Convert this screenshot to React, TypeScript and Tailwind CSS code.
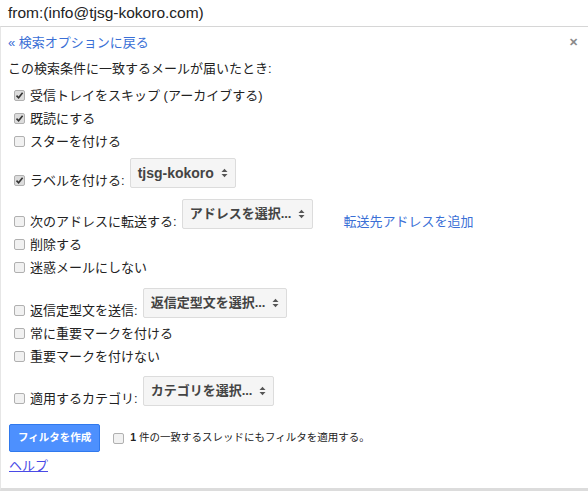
import React from "react";

const FONT = "font-['Liberation_Sans','Noto_Sans_CJK_JP',sans-serif]";

function Box({ checked = false }: { checked?: boolean }) {
  return (
    <span
      className={`inline-flex h-[11px] w-[11px] shrink-0 items-center justify-center rounded-[2px] border border-[#b0b0b0] ${
        checked ? "bg-[#dcdcdc]" : "bg-[#f1f1f1]"
      }`}
    >
      {checked && (
        <svg width="9" height="9" viewBox="0 0 9 9">
          <path d="M1.5 4.6 L3.6 6.7 L7.6 1.8" fill="none" stroke="#333" strokeWidth="1.6" />
        </svg>
      )}
    </span>
  );
}

function Arrows() {
  return (
    <svg width="7" height="10" viewBox="0 0 7 10" className="shrink-0">
      <path d="M0.5 4 L3.5 0.8 L6.5 4 Z" fill="#555" />
      <path d="M0.5 6 L3.5 9.2 L6.5 6 Z" fill="#555" />
    </svg>
  );
}

function Select({ label, latin }: { label: string; latin?: boolean }) {
  return (
    <div
      className={`mb-[4px] ml-[5px] flex h-[30px] items-center gap-[7px] rounded-[2px] border border-[#dcdcdc] bg-[#f5f5f5] pl-[7px] pr-[7px] font-bold text-[#444] ${
        latin ? "text-[14px]" : "text-[13px]"
      }`}
    >
      <span>{label}</span>
      <Arrows />
    </div>
  );
}

function Row({ label, checked }: { label: string; checked?: boolean }) {
  return (
    <div className="flex h-[23px] items-center gap-[5px] pl-[6px] leading-[23px]">
      <Box checked={checked} />
      <span>{label}</span>
    </div>
  );
}

function SelectRow({
  label,
  select,
  pt,
  checked,
  latin,
  extra,
}: {
  label: string;
  select: string;
  pt: string;
  checked?: boolean;
  latin?: boolean;
  extra?: React.ReactNode;
}) {
  return (
    <div className={`flex items-end pl-[6px] ${pt}`}>
      <div className="flex h-[23px] items-center gap-[5px]">
        <Box checked={checked} />
        <span>{label}</span>
      </div>
      <Select label={select} latin={latin} />
      {extra}
    </div>
  );
}

export default function App() {
  return (
    <div className={`h-[491px] w-[588px] overflow-hidden bg-white text-[#222] ${FONT}`}>
      <div className="h-[26px] px-2 text-[15.5px] leading-[26px]">from:(info@tjsg-kokoro.com)</div>
      <div className="relative box-border h-[465px] border-t border-b-[3px] border-l border-t-[#d6d6d6] border-b-[#dcdcdc] border-l-[#e6e6e6] px-[7px] text-[13px]">
        <span className="absolute right-[10px] top-[10px] text-[11px] font-bold leading-none text-[#8a8a8a]">✕</span>
        <div className="pt-[6px] leading-[20px] text-[#3a6fd6]">« 検索オプションに戻る</div>
        <div className="mt-[6px] leading-[20px]">この検索条件に一致するメールが届いたとき:</div>
        <div className="mt-[5px]">
          <Row label="受信トレイをスキップ (アーカイブする)" checked />
          <Row label="既読にする" checked />
          <Row label="スターを付ける" />
          <SelectRow label="ラベルを付ける:" select="tjsg-kokoro" pt="pt-[5px]" checked latin />
          <SelectRow
            label="次のアドレスに転送する:"
            select="アドレスを選択..."
            pt="pt-[7px]"
            extra={<span className="ml-[30px] leading-[23px] text-[#3a6fd6]">転送先アドレスを追加</span>}
          />
          <Row label="削除する" />
          <Row label="迷惑メールにしない" />
          <SelectRow label="返信定型文を送信:" select="返信定型文を選択..." pt="pt-[9px]" />
          <Row label="常に重要マークを付ける" />
          <Row label="重要マークを付けない" />
          <SelectRow label="適用するカテゴリ:" select="カテゴリを選択..." pt="pt-[8px]" />
        </div>
        <div className="mt-[14px] flex items-center">
          <button className="ml-[1px] h-[28px] rounded-[2px] border border-[#3079ed] bg-[#4d90fe] px-[8px] text-[10.5px] font-bold text-white">
            フィルタを作成
          </button>
          <div className="ml-[13px] flex items-center gap-[6px] text-[10.5px]">
            <Box />
            <span>
              <b>1</b> 件の一致するスレッドにもフィルタを適用する。
            </span>
          </div>
        </div>
        <div className="mt-[4px] leading-[20px]">
          <a href="#" className="ml-[1px] text-[#4a4ae6] underline">ヘルプ</a>
        </div>
      </div>
    </div>
  );
}
